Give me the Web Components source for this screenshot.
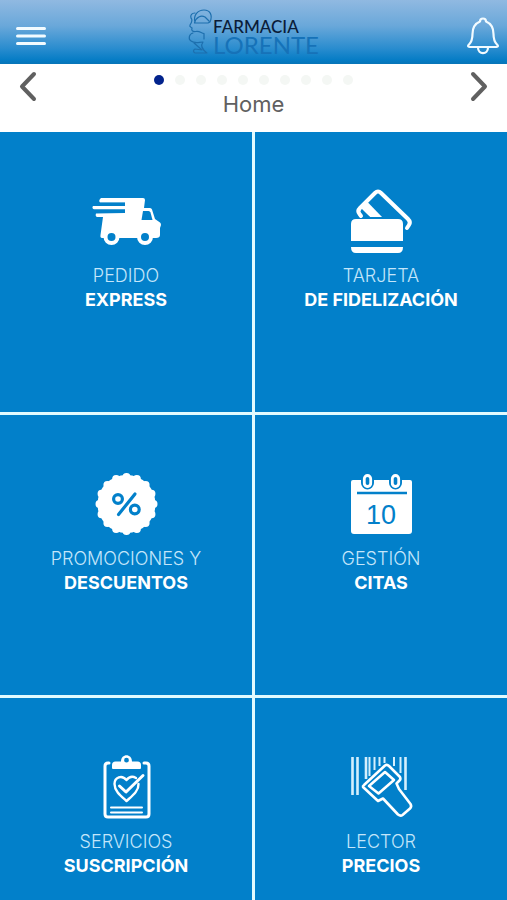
<!DOCTYPE html>
<html lang="es">
<head>
<meta charset="utf-8">
<meta name="viewport" content="width=device-width, initial-scale=1">
<title>Farmacia Lorente</title>
<style>
  html, body { margin: 0; }
  body {
    --brand: #0280ca;
    --ink: #606060;
    font-family: Inter, "Liberation Sans", sans-serif;
    background: #fff;
  }
</style>
</head>
<body>
<pharmacy-app></pharmacy-app>

<script>
const define = (name, html, setup) => {
  const template = document.createElement('template');
  template.innerHTML = html;
  customElements.define(name, class extends HTMLElement {
    constructor() {
      super();
      this.attachShadow({ mode: 'open' }).append(template.content.cloneNode(true));
    }
    connectedCallback() { if (setup) setup(this, this.shadowRoot); }
  });
};

define('app-logo', `
<style>
  :host { display: block; }
  svg { display: block; }
  .top { font: 500 17px Lato, sans-serif; fill: #0b1c38; }
  .bottom { font: 400 24px Lato, sans-serif; fill: #1672b8; }
</style>
<svg width="140" height="52" viewBox="0 0 140 52" role="img" aria-label="Farmacia Lorente">
  <g fill="none" stroke="#1d6fae" stroke-width="1.2" stroke-linecap="round" stroke-linejoin="round">
    <path d="M7 16C5 9 10 4 16 4C22 4 25 9 22 16L20 17H6.500C8 11 13 9 17 11L21 15"/>
    <path d="M7 7C4 7 2 9 3 12C5 14 4 16 2 19C1 21 3 21 4 22C3 25 5 26 8 25.500C12 25 13 27 16 27.500V33"/>
    <path d="M5 27C1 28 0 33 3 35C7 38 11 36 15 36C12 40 15 44 19 47H7C5 46 5 44 7 43L14 44L6 37"/>
  </g>
  <text class="top" x="25" y="27">FARMACIA</text>
  <text class="bottom" x="25" y="48">LORENTE</text>
</svg>`);

define('app-header', `
<style>
  :host {
    display: grid; grid-template-columns: 1fr auto 1fr; align-items: center;
    height: 64px; box-sizing: border-box; padding: 0 8px 0 16px; flex: none;
    background: linear-gradient(#90b9e1, #6aa8da 40%, #2b8dcf 75%, #057cc5 94%, #0875b7);
  }
  button { padding: 0; border: 0; background: none; display: block; margin-top: 8px; cursor: pointer; }
  .alerts { justify-self: end; }
  svg { display: block; fill: none; stroke: #f2fbff; stroke-linecap: round; stroke-linejoin: round; }
</style>
<button type="button" aria-label="Menú">
  <svg width="30" height="20" viewBox="0 0 30 20" stroke-width="3"><path d="M1.500 2.500H28.500M1.500 10H28.500M1.500 17.500H28.500"/></svg>
</button>
<app-logo></app-logo>
<button class="alerts" type="button" aria-label="Notificaciones">
  <svg width="32" height="38" viewBox="0 0 32 38" stroke-width="2.200">
    <path d="M13 4.500C13 .5 19 .5 19 4.500C25 7 26.500 12 26.500 17C26.500 23 27.500 25 30 27.500C31.500 29 31 30 29.500 30H2.500C1 30 .5 29 2 27.500C4.500 25 5.500 23 5.500 17C5.500 12 7 7 13 4.500Z"/>
    <path d="M11 30.500C11 38 21 38 21 30.500"/>
  </svg>
</button>`);

define('page-dots', `
<style>
  :host { display: flex; justify-content: center; gap: 11px; }
  i { width: 10px; height: 10px; border-radius: 50%; background: #f4f7f4; }
  i.on { background: #02238c; }
</style>`, (host, root) => {
  const count = Number(host.getAttribute('count'));
  const current = Number(host.getAttribute('current'));
  for (let n = 1; n <= count; n++) {
    const dot = document.createElement('i');
    if (n === current) dot.className = 'on';
    root.append(dot);
  }
});

define('page-nav', `
<style>
  :host {
    display: flex; justify-content: space-between; align-items: flex-start; flex: none;
    height: 68px; box-sizing: border-box; padding: 7px 16px 0; background: #fff; color: var(--ink);
  }
  button { padding: 0; border: 0; background: none; color: inherit; cursor: pointer; }
  svg { display: block; fill: none; stroke: currentColor; stroke-width: 4; stroke-linecap: round; stroke-linejoin: round; }
  .center { padding-top: 4px; text-align: center; }
  h1 { margin: 5px 0 0; font-weight: 400; font-size: 22px; line-height: 28px; }
</style>
<button type="button" aria-label="Anterior"><svg width="24" height="32" viewBox="0 0 24 32"><path d="M18 3L6 15.500L18 28"/></svg></button>
<div class="center"><page-dots count="10" current="1"></page-dots><h1><slot></slot></h1></div>
<button type="button" aria-label="Siguiente"><svg width="24" height="32" viewBox="0 0 24 32"><path d="M6 3L18 15.500L6 28"/></svg></button>`);

define('menu-tile', `
<style>
  :host { display: block; aspect-ratio: 9 / 10; background: var(--brand); }
  a {
    display: flex; flex-direction: column; align-items: center; height: 100%;
    box-sizing: border-box; padding-top: 56px; color: #fff; text-decoration: none;
    text-align: center; line-height: 24px; white-space: nowrap;
  }
  .icon { height: 66px; margin-bottom: 10px; }
  .name { font-size: 18px; font-weight: 300; color: #c4e6fa; }
  .detail { font-size: 18px; font-weight: 700; }
</style>
<a href="#"><span class="icon"><slot name="icon"></slot></span>
<span class="name"><slot name="name"></slot></span>
<span class="detail"><slot></slot></span></a>`);

const icons = {
  truck: `
    <path fill="#fff" d="M11 10H53Q55 10 55 12L54 20H60Q61.500 20 62 21.500L65 31L70 34.500Q71 35 71 37L70 40V47Q70 50 66 50H12Q10 50 10.500 47L13 29H7Q5 28 6 25.500L35 25V21.500H4Q1.500 20 3 18H35V14.500H10Q8 12.500 11 10Z"/>
    <path class="b" fill="none" stroke-width="2.400" d="M8 16H35M3 22.800H35"/>
    <path class="f" d="M53 23H58.500Q60 23 60.500 24.500L62.500 32H51.500Z"/>
    <g class="fs" stroke="#fff" stroke-width="4"><circle cx="21.500" cy="49" r="6"/><circle cx="55" cy="49" r="6"/></g>`,
  cards: `
    <path fill="none" stroke="#fff" stroke-width="4" stroke-linejoin="round" stroke-linecap="round" d="M16 28L14.500 26Q12 23 15 20L30 5Q33 2 36 5L63 31Q66 34 64 37L62 40"/>
    <path fill="#fff" d="M20 15L22.500 14L37 29H25L15 19Z"/>
    <path class="f" d="M19 24L25 29H18.500Z"/>
    <path fill="#fff" d="M11 31H53Q58 31 58 36V53H6V36Q6 31 11 31ZM6 59H58Q58 65 53 65H11Q6 65 6 59Z"/>`,
  offer: `
    <circle cx="36.500" cy="33" r="29" fill="#fff"/>
    <circle cx="36.500" cy="33" r="27" fill="none" stroke="#fff" stroke-width="8" stroke-linecap="round" pathLength="16" stroke-dasharray="0 1"/>
    <g class="b" fill="none" stroke-width="3.200" stroke-linecap="round"><circle cx="28" cy="28" r="4.400"/><circle cx="44.800" cy="38.500" r="4.400"/><path d="M45 23L28.500 43.500"/></g>`,
  calendar: `
    <path fill="#fff" d="M8 9H65Q67 9 67 11V60Q67 63 64 63H9Q6 63 6 60V11Q6 9 8 9Z"/>
    <path class="b" stroke-width="2.600" d="M12 22H62"/>
    <g class="b" fill="none"><rect x="17" y="2.500" width="11" height="15" rx="5.500" stroke-width="2"/><rect x="45" y="2.500" width="11" height="15" rx="5.500" stroke-width="2"/></g>
    <g class="fs" stroke="#fff" stroke-width="2.800"><rect x="19.300" y="4.500" width="6.400" height="11" rx="3.200"/><rect x="47.300" y="4.500" width="6.400" height="11" rx="3.200"/></g>
    <text class="f" x="36" y="53" text-anchor="middle" font-family="Liberation Sans, sans-serif" font-size="27">10</text>`,
  clipboard: `
    <g fill="none" stroke="#fff" stroke-width="3" stroke-linecap="round" stroke-linejoin="round">
      <path d="M19 9H18Q15 9 15 12V60Q15 63 18 63H56Q59 63 59 60V12Q59 9 56 9H54"/>
      <path stroke-width="2.400" d="M46 24C42 21.500 38.500 23.500 36.500 26C32 20.500 24.500 23 24.500 30C24.500 37 31 42 36.500 47C42 42 49 37 48.500 30"/>
      <path d="M29.500 32L36 38L53 21.500"/>
      <path stroke-width="2" d="M21 53.500H52M21 58.500H52"/>
    </g>
    <path fill="#fff" fill-rule="evenodd" d="M23 15Q22 15 22 14V11Q22 7.500 25.500 7.500H31C31 -1 42 -1 42 7.500H47.500Q51 7.500 51 11V14Q51 15 50 15ZM36.500 3.800A2.400 2.400 0 1 0 36.500 8.600A2.400 2.400 0 1 0 36.500 3.800Z"/>`,
  scanner: `
    <g stroke="#d4effd" fill="none">
      <path stroke-width="2.600" d="M7.500 3V41M12.500 3V41M21 3V25M60.500 3V36"/>
      <path stroke-width="2" d="M24.500 3V22M29.500 3V16M34.500 3V12M39.500 3V9M49 3V12M55.500 3V19"/>
    </g>
    <g class="fs" stroke="#fff" stroke-width="2.600" stroke-linejoin="round">
      <path d="M19 31L40 11.500Q42 10 44 12L55 23Q56 25 54.500 26.500L51.500 29.500L54 35L65.500 50Q67 52.500 65 54.500L57.500 61Q55.500 62.500 53 60.500L38 44.500L33 47L18 33Q17.500 32 19 31Z"/>
      <path d="M24 32L40 18L49 26L33.500 39.500Z"/>
    </g>`
};

define('menu-icon', `
<style>
  :host { display: block; }
  svg { display: block; overflow: visible; }
  .b { stroke: var(--brand); }
  .f, .fs { fill: var(--brand); }
</style>
<svg width="72" height="66" viewBox="0 0 72 66" aria-hidden="true"></svg>`, (host, root) => {
  root.querySelector('svg').innerHTML = icons[host.getAttribute('name')];
});

define('pharmacy-app', `
<style>
  :host { display: flex; flex-direction: column; height: 100vh; overflow: hidden; }
  main {
    flex: 1; min-height: 0; overflow-y: auto; scrollbar-width: none;
    display: grid; grid-template-columns: 1fr 1fr; gap: 3px; align-content: start; background: #e2fbff;
  }
</style>
<app-header></app-header>
<page-nav>Home</page-nav>
<main>
  <menu-tile><menu-icon slot="icon" name="truck"></menu-icon><span slot="name">PEDIDO</span>EXPRESS</menu-tile>
  <menu-tile><menu-icon slot="icon" name="cards"></menu-icon><span slot="name">TARJETA</span>DE FIDELIZACIÓN</menu-tile>
  <menu-tile><menu-icon slot="icon" name="offer"></menu-icon><span slot="name">PROMOCIONES Y</span>DESCUENTOS</menu-tile>
  <menu-tile><menu-icon slot="icon" name="calendar"></menu-icon><span slot="name">GESTIÓN</span>CITAS</menu-tile>
  <menu-tile><menu-icon slot="icon" name="clipboard"></menu-icon><span slot="name">SERVICIOS</span>SUSCRIPCIÓN</menu-tile>
  <menu-tile><menu-icon slot="icon" name="scanner"></menu-icon><span slot="name">LECTOR</span>PRECIOS</menu-tile>
</main>`);
</script>
</body>
</html>
